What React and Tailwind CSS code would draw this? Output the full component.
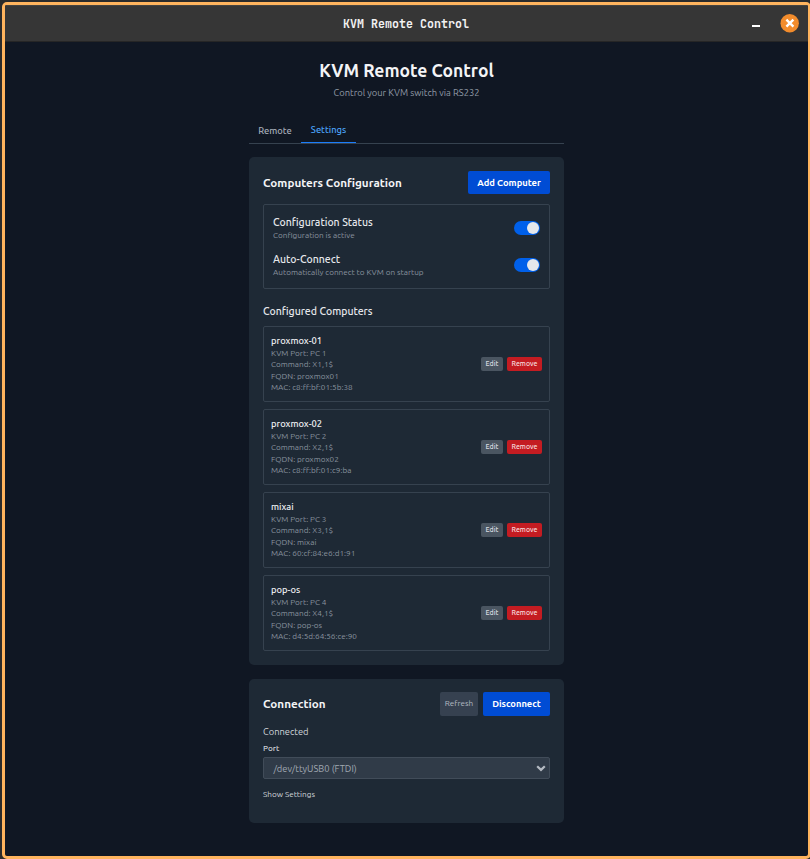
const computers = [
  { name: 'proxmox-01', port: 'PC 1', command: 'X1,1$', fqdn: 'proxmox01', mac: 'c8:ff:bf:01:5b:38' },
  { name: 'proxmox-02', port: 'PC 2', command: 'X2,1$', fqdn: 'proxmox02', mac: 'c8:ff:bf:01:c9:ba' },
  { name: 'mixai', port: 'PC 3', command: 'X3,1$', fqdn: 'mixai', mac: '60:cf:84:e6:d1:91' },
  { name: 'pop-os', port: 'PC 4', command: 'X4,1$', fqdn: 'pop-os', mac: 'd4:5d:64:56:ce:90' },
];

function TitleBar() {
  return (
    <header className="flex h-[37px] shrink-0 items-center border-t border-b border-t-[#454340] border-b-[#262626] bg-[#363636] pr-[9px]">
      <div className="w-[69px]" />
      <div className="flex-1 pt-[3px] text-center font-['JetBrains_Mono','DejaVu_Sans_Mono',monospace] text-[11.67px] leading-none font-bold text-[#f2f2f2]">
        KVM Remote Control
      </div>
      <div className="flex w-[61px] items-center justify-end gap-5">
        <span className="mt-[5px] h-[2px] w-2 bg-white" />
        <svg className="size-[19px]" viewBox="0 0 19 19">
          <circle cx="9.7" cy="9.2" r="9.2" fill="#f28c2c" />
          <path d="M6.4 5.7 13.4 12.7M13.4 5.7 6.4 12.7" stroke="#fff" strokeWidth="2.4" />
        </svg>
      </div>
    </header>
  );
}

function Toggle() {
  return (
    <div className="flex h-3.5 w-[26px] items-center justify-end rounded-full bg-[#0060ea] pr-[1.4px]">
      <div className="size-3 rounded-full bg-[#e5e7eb]" />
    </div>
  );
}

function Setting({ title, text }) {
  return (
    <div className="flex h-[27px] items-center justify-between">
      <div>
        <div className="text-[10.5px] leading-[15px] font-medium text-[#e5e7eb]">{title}</div>
        <div className="text-[8.17px] leading-[11px] text-[#89939f]">{text}</div>
      </div>
      <Toggle />
    </div>
  );
}

function Computer({ c }) {
  return (
    <div className="flex h-[76px] items-center justify-between rounded-[2px] border border-[#36424f] px-[7px]">
      <div>
        <div className="text-[9.33px] leading-[13.6px] font-medium text-[#eceef1]">{c.name}</div>
        <div className="text-[8.17px] leading-[11.43px] text-[#89939f]">
          <div>KVM Port: {c.port}</div>
          <div>Command: {c.command}</div>
          <div>FQDN: {c.fqdn}</div>
          <div>MAC: {c.mac}</div>
        </div>
      </div>
      <div className="flex gap-1 text-[7px] leading-none font-medium">
        <button className="h-3.5 w-[22px] rounded-[2px] bg-[#4a5561] pb-[2px] text-[#d8dbe0]">Edit</button>
        <button className="h-3.5 w-[35px] rounded-[2px] bg-[#c41c22] pb-[2px] text-[#f5dadc]">Remove</button>
      </div>
    </div>
  );
}

export default function App() {
  return (
    <div className="h-[859px] w-[810px] overflow-hidden bg-[#2b2b2b] pt-[2px] pl-[2px] font-['Ubuntu','Noto_Sans',sans-serif]">
      <div className="flex h-[857px] w-[809px] flex-col overflow-hidden rounded-[5px] border-[3px] border-[#ffb45e] bg-[#101723]">
        <TitleBar />
        <main className="flex flex-1 justify-center">
          <div className="flex w-[315px] flex-col">
            <h1 className="mt-[17px] text-center text-[17.5px] leading-6 font-bold text-[#f3f4f6]">KVM Remote Control</h1>
            <p className="mt-[3px] text-center text-[9.33px] leading-[14px] text-[#929ba7]">Control your KVM switch via RS232</p>

            <nav className="mt-[18px] flex h-[26px] border-b border-[#36424f] text-[9.33px] leading-[14px] font-medium">
              <div className="w-[52px] pt-[6px] text-center text-[#a3abb6]">Remote</div>
              <div className="h-[25px] w-[55px] border-b border-[#1c7dfa] pt-[5px] text-center text-[#4ba3f8]">Settings</div>
            </nav>

            <section className="mt-[13px] h-[508px] rounded-[5px] bg-[#1e2935] p-3.5">
              <div className="flex h-[23px] items-center justify-between">
                <h2 className="text-[11.67px] leading-4 font-bold text-[#f3f4f6]">Computers Configuration</h2>
                <button className="h-[23px] w-[82px] rounded-[2px] bg-[#004cd4] text-[9.33px] leading-[13px] font-bold text-white">Add Computer</button>
              </div>
              <div className="mt-[10px] flex h-[85px] flex-col gap-[10px] rounded-[2px] border border-[#36424f] px-[9px] pt-[9px]">
                <Setting title="Configuration Status" text="Configuration is active" />
                <Setting title="Auto-Connect" text="Automatically connect to KVM on startup" />
              </div>
              <h3 className="mt-[14px] text-[10.5px] leading-4 font-medium text-[#e5e7eb]">Configured Computers</h3>
              <div className="mt-[7px] flex flex-col gap-[7px]">
                {computers.map((c) => (
                  <Computer key={c.name} c={c} />
                ))}
              </div>
            </section>

            <section className="mt-3.5 h-36 rounded-[5px] bg-[#1e2935] px-3.5 pt-[13px]">
              <div className="flex h-6 items-center justify-between">
                <h2 className="text-[11.67px] leading-4 font-bold text-[#f3f4f6]">Connection</h2>
                <div className="flex gap-[5px] leading-none">
                  <button className="h-6 w-[38px] rounded-[2px] bg-[#364150] pb-[2px] text-[8.17px] text-[#b4bac3]">Refresh</button>
                  <button className="h-6 w-[67px] rounded-[2px] bg-[#004cd4] text-[9.33px] font-bold text-white">Disconnect</button>
                </div>
              </div>
              <div className="mt-[9px] text-[9.33px] leading-[14px] text-[#d1d5db]">Connected</div>
              <div className="mt-[3px] text-[8.17px] leading-3 font-medium text-[#d1d5db]">Port</div>
              <div className="mt-[3px] flex h-[22px] items-center justify-between rounded-[2px] border border-[#414c59] bg-[#303b48] pr-[3px] pl-[9.5px]">
                <span className="pt-[2px] text-[9.33px] leading-[14px] text-[#a1a9b3]">/dev/ttyUSB0 (FTDI)</span>
                <svg className="h-[7px] w-[10px]" viewBox="0 0 10 7">
                  <path d="M1.2 1.2 5 4.9 8.8 1.2" fill="none" stroke="#b4bac2" strokeWidth="2.2" />
                </svg>
              </div>
              <div className="mt-[9px] text-[8.17px] leading-3 text-[#d1d5db]">Show Settings</div>
            </section>
          </div>
        </main>
      </div>
    </div>
  );
}
